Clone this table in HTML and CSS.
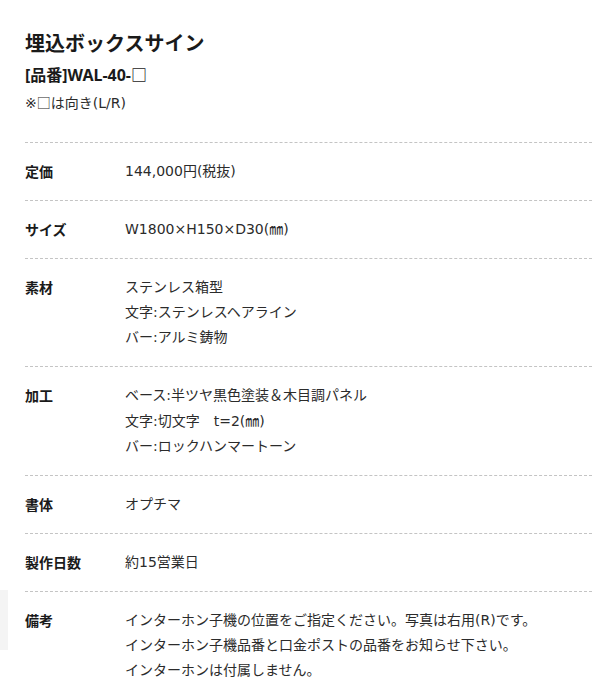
FILE: index.html
```html
<!DOCTYPE html>
<html lang="ja">
<head>
  <meta charset="UTF-8">
  <title>埋込ボックスサイン</title>
  <meta name="viewport" content="width=device-width, initial-scale=1.0">
  <link rel="stylesheet" href="styles.css">
</head>
<body>
<div class="side-tab"></div>

<div class="product">
  <h1 class="product-title">埋込ボックスサイン</h1>
  <div class="product-code">[品番]WAL-40-□</div>
  <p class="product-note">※<span class="box">□</span>は向き(L/R)</p>

  <!-- 仕様 -->
  <dl class="spec">
    <div class="spec-row">
      <dt>定価</dt>
      <dd>144,000円(税抜)</dd>
    </div>
    <div class="spec-row">
      <dt>サイズ</dt>
      <dd>W1800×H150×D30(㎜)</dd>
    </div>
    <div class="spec-row">
      <dt>素材</dt>
      <dd>ステンレス箱型<br>文字:ステンレスヘアライン<br>バー:アルミ鋳物</dd>
    </div>
    <div class="spec-row">
      <dt>加工</dt>
      <dd>ベース:半ツヤ黒色塗装＆木目調パネル<br>文字:切文字　t=2(㎜)<br>バー:ロックハンマートーン</dd>
    </div>
    <div class="spec-row">
      <dt>書体</dt>
      <dd>オプチマ</dd>
    </div>
    <div class="spec-row">
      <dt>製作日数</dt>
      <dd>約15営業日</dd>
    </div>
    <div class="spec-row">
      <dt>備考</dt>
      <dd>インターホン子機の位置をご指定ください。写真は右用(R)です。<br>インターホン子機品番と口金ポストの品番をお知らせ下さい。<br>インターホンは付属しません。</dd>
    </div>
  </dl>
</div>
</body>
</html>
```

FILE: styles.css
```css
:root {
  --text-main: #1a1a1a;
  --text-value: #2b2b2b;
  --line: #c4c4c4;
  --font-body: "DejaVu Sans", "Noto Sans CJK JP", sans-serif;
}

* { box-sizing: border-box; }

body {
  margin: 0;
  font-family: "Noto Sans", "Noto Sans CJK JP", sans-serif;
  color: var(--text-main);
  background: #fff;
  overflow: hidden;
}

.side-tab {
  position: absolute;
  left: 0;
  top: 590px;
  width: 8px;
  height: 60px;
  background: #f4f4f4;
}

.product {
  padding: 29px 0 0 25px;
}

.product-title {
  margin: 0;
  font-size: 20px;
  line-height: 30px;
  font-weight: 700;
}

.product-code {
  margin-top: 4px;
  font-size: 16px;
  line-height: 24px;
  font-weight: 700;
}

.product-note {
  margin: 4px 0 0;
  font-family: var(--font-body);
  font-size: 14px;
  line-height: 22px;
  color: var(--text-value);
}

.product-note .box {
  font-family: "Noto Sans CJK JP", sans-serif;
}

/* 仕様 */

.spec {
  margin: 28px 0 0;
  font-size: 14px;
  line-height: 25.1px;
}

.spec-row {
  display: grid;
  grid-template-columns: 100px 1fr;
  padding: 16px 0;
  border-top: 1px dashed var(--line);
}

.spec-row dt {
  font-weight: 700;
  color: var(--text-main);
}

.spec-row dd {
  margin: 0;
  font-family: var(--font-body);
  color: var(--text-value);
  white-space: nowrap;
}
```
